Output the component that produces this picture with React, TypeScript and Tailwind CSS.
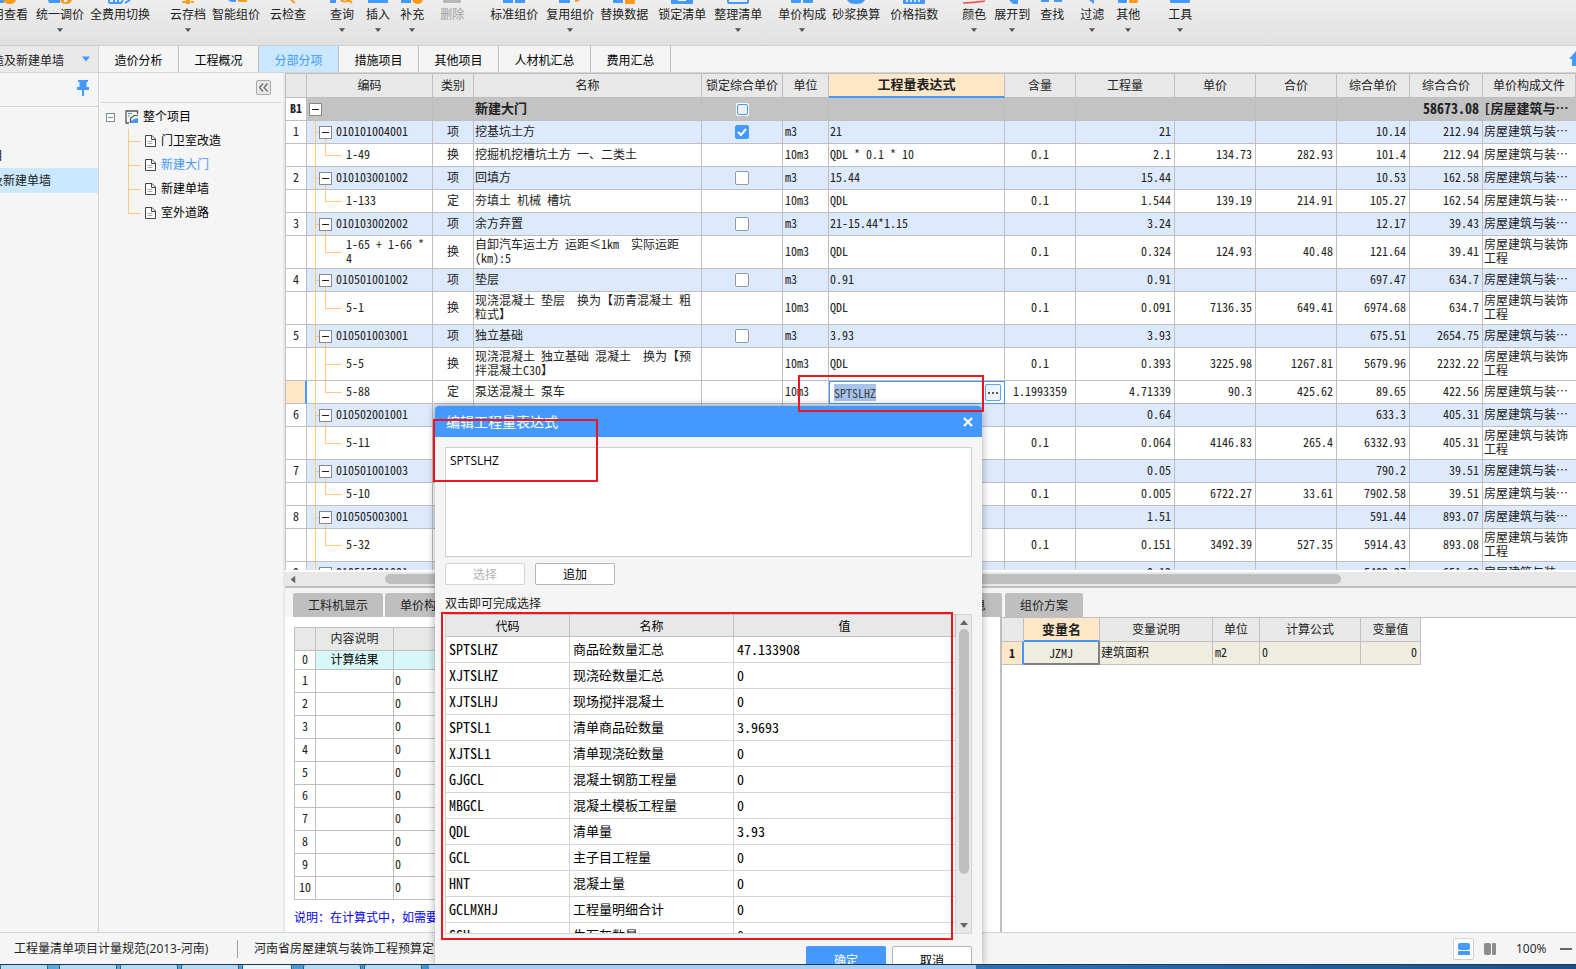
import { useEffect, useRef, useState } from "react";
import type { ReactNode } from "react";

interface Tool {
  label: string;
  gap: string;
  menu?: boolean;
  disabled?: boolean;
  icon: ReactNode;
}

interface Row {
  no?: string;
  kind: "section" | "item" | "sub";
  code?: string;
  type?: string;
  name?: string;
  lock?: boolean;
  unit?: string;
  expr?: string;
  ratio?: string;
  qty?: string;
  price?: string;
  total?: string;
  unitPrice?: string;
  sum?: string;
  file: string;
  tall?: boolean;
  more?: boolean;
  active?: boolean;
}

const B = "#4499ff";
const O = "#ff9a1f";

const TOOLS: Tool[] = [
  { label: "费用查看", gap: "-ml-5", icon: <><path d="M0 0h12v3H0z" fill={B} /><path d="M11 0h13c-1 3-3 4-6 4s-6-1-7-4z" fill={O} /></> },
  { label: "统一调价", gap: "ml-2", menu: true, icon: <><path d="M0 0h12v3H1z" fill={B} /><path d="M12 0h12c-1 3-3 4-6 4s-5-1-6-4z" fill={O} /><path d="M16 0h3v2h-3z" fill="#fff" /></> },
  { label: "全费用切换", gap: "ml-1.5", icon: <path d="M1 0v2q0 1 1 1h11l2-3M6 0v3M10 0v3M17 3l5-3" fill="none" stroke={B} strokeWidth="2" /> },
  { label: "云存档", gap: "ml-5", menu: true, icon: <><path d="M6 1h4v2H6zM15 1h3v2h-3z" fill={O} /><path d="M10 0h4v4h-4z" fill={O} /></> },
  { label: "智能组价", gap: "ml-1.5", icon: <><path d="M4 0h8v2H7z" fill={B} /><path d="M13 0h10v2H15z" fill={O} /></> },
  { label: "云检查", gap: "ml-2.5", icon: <path d="M15 0l4 3" stroke={O} strokeWidth="2" /> },
  { label: "查询", gap: "ml-6", menu: true, icon: <><path d="M0 0h6v3H0z" fill={B} /><path d="M11 0c1 2 6 2 8 0l3 3" fill="none" stroke={O} strokeWidth="2" /></> },
  { label: "插入", gap: "ml-3", menu: true, icon: <path d="M2 0h20v3H2z" fill={B} /> },
  { label: "补充", gap: "ml-2.5", menu: true, icon: <><path d="M1 0h10v3H1z" fill={B} /><path d="M12 0h11c-1 3-3 4-5 4s-5-1-6-4z" fill={O} /></> },
  { label: "删除", gap: "ml-4", disabled: true, icon: <path d="M3 0h18v2q0 1-1 1H4q-1 0-1-1z" fill="#b9b9b9" /> },
  { label: "标准组价", gap: "ml-6.5", icon: <path d="M1 0h10v3H1zM13 0h10v3H13z" fill={B} /> },
  { label: "复用组价", gap: "ml-2", menu: true, icon: <><path d="M1 0h11v3H1z" fill={B} /><path d="M17 0h5l-3 2h-2z" fill={O} /></> },
  { label: "替换数据", gap: "ml-1.5", icon: <><path d="M1 0h10v3H1z" fill={B} /><path d="M13 0h10v3q0 1-1 1h-9z" fill={O} /></> },
  { label: "锁定清单", gap: "ml-2.5", icon: <><path d="M1 0h22v3q0 1-1 1H2q-1 0-1-1z" fill={B} /><path d="M8 0h8v1H8z" fill="#fff" /></> },
  { label: "整理清单", gap: "ml-2", menu: true, icon: <path d="M2 0v2q0 1 1 1h18q1 0 1-1V0" fill="none" stroke={B} strokeWidth="2" /> },
  { label: "单价构成", gap: "ml-4", menu: true, icon: <path d="M1 0h10v2q0 1-1 1H2q-1 0-1-1zM13 0h10v2q0 1-1 1h-8q-1 0-1-1z" fill={B} /> },
  { label: "砂浆换算", gap: "ml-1.5", icon: <path d="M3 0h18c-2 3-5 4-9 4s-7-1-9-4z" fill={B} /> },
  { label: "价格指数", gap: "ml-2.5", icon: <><path d="M1 0h22v3q0 1-1 1H2q-1 0-1-1z" fill={B} /><path d="M5 0v2M9 0v2M13 0v2M17 0v2" stroke="#fff" strokeWidth="1.5" /></> },
  { label: "颜色", gap: "ml-6", menu: true, icon: <path d="M1 3c7 0 14-1 22-2" fill="none" stroke="#e85a55" strokeWidth="1.6" /> },
  { label: "展开到", gap: "ml-2", menu: true, icon: <path d="M9 0h9v3q0 1-1 1h-4z" fill={B} /> },
  { label: "查找", gap: "ml-2.5", icon: <path d="M1 0h8v2H1zM14 0h8v2h-8z" fill={B} /> },
  { label: "过滤", gap: "ml-4", menu: true, icon: <path d="M9 0h5v4z" fill={B} /> },
  { label: "其他", gap: "ml-3", menu: true, icon: <><path d="M2 0h9v2q0 1-1 1H3q-1 0-1-1z" fill={B} /><path d="M13 0h9v2q0 1-1 1h-7q-1 0-1-1z" fill={O} /></> },
  { label: "工具", gap: "ml-7", menu: true, icon: <path d="M2 0h20v2q0 1-2 1H4q-2 0-2-1z" fill={B} /> },
];

const TABS = ["造价分析", "工程概况", "分部分项", "措施项目", "其他项目", "人材机汇总", "费用汇总"];

const TREE = ["门卫室改造", "新建大门", "新建单墙", "室外道路"];

const SHORT = "房屋建筑与装…";
const FULL = "房屋建筑与装饰工程";

const ROWS: Row[] = [
  { no: "B1", kind: "section", name: "新建大门", lock: false, sum: "58673.08", file: "[房屋建筑与…" },
  { no: "1", kind: "item", code: "010101004001", type: "项", name: "挖基坑土方", lock: true, unit: "m3", expr: "21", qty: "21", unitPrice: "10.14", sum: "212.94", file: SHORT },
  { kind: "sub", code: "1-49", type: "换", name: "挖掘机挖槽坑土方 一、二类土", unit: "10m3", expr: "QDL * 0.1 * 10", ratio: "0.1", qty: "2.1", price: "134.73", total: "282.93", unitPrice: "101.4", sum: "212.94", file: SHORT },
  { no: "2", kind: "item", code: "010103001002", type: "项", name: "回填方", lock: false, unit: "m3", expr: "15.44", qty: "15.44", unitPrice: "10.53", sum: "162.58", file: SHORT },
  { kind: "sub", code: "1-133", type: "定", name: "夯填土 机械 槽坑", unit: "10m3", expr: "QDL", ratio: "0.1", qty: "1.544", price: "139.19", total: "214.91", unitPrice: "105.27", sum: "162.54", file: SHORT },
  { no: "3", kind: "item", code: "010103002002", type: "项", name: "余方弃置", lock: false, unit: "m3", expr: "21-15.44*1.15", qty: "3.24", unitPrice: "12.17", sum: "39.43", file: SHORT },
  { kind: "sub", tall: true, code: "1-65 + 1-66 *\n4", type: "换", name: "自卸汽车运土方 运距≤1km  实际运距\n(km):5", unit: "10m3", expr: "QDL", ratio: "0.1", qty: "0.324", price: "124.93", total: "40.48", unitPrice: "121.64", sum: "39.41", file: FULL },
  { no: "4", kind: "item", code: "010501001002", type: "项", name: "垫层", lock: false, unit: "m3", expr: "0.91", qty: "0.91", unitPrice: "697.47", sum: "634.7", file: SHORT },
  { kind: "sub", tall: true, code: "5-1", type: "换", name: "现浇混凝土 垫层  换为【沥青混凝土 粗\n粒式】", unit: "10m3", expr: "QDL", ratio: "0.1", qty: "0.091", price: "7136.35", total: "649.41", unitPrice: "6974.68", sum: "634.7", file: FULL },
  { no: "5", kind: "item", code: "010501003001", type: "项", name: "独立基础", lock: false, unit: "m3", expr: "3.93", qty: "3.93", unitPrice: "675.51", sum: "2654.75", file: SHORT },
  { kind: "sub", tall: true, more: true, code: "5-5", type: "换", name: "现浇混凝土 独立基础 混凝土  换为【预\n拌混凝土C30】", unit: "10m3", expr: "QDL", ratio: "0.1", qty: "0.393", price: "3225.98", total: "1267.81", unitPrice: "5679.96", sum: "2232.22", file: FULL },
  { kind: "sub", active: true, code: "5-88", type: "定", name: "泵送混凝土 泵车", unit: "10m3", ratio: "1.1993359", qty: "4.71339", price: "90.3", total: "425.62", unitPrice: "89.65", sum: "422.56", file: SHORT },
  { no: "6", kind: "item", code: "010502001001", qty: "0.64", unitPrice: "633.3", sum: "405.31", file: SHORT },
  { kind: "sub", tall: true, code: "5-11", ratio: "0.1", qty: "0.064", price: "4146.83", total: "265.4", unitPrice: "6332.93", sum: "405.31", file: FULL },
  { no: "7", kind: "item", code: "010501001003", qty: "0.05", unitPrice: "790.2", sum: "39.51", file: SHORT },
  { kind: "sub", code: "5-10", ratio: "0.1", qty: "0.005", price: "6722.27", total: "33.61", unitPrice: "7902.58", sum: "39.51", file: SHORT },
  { no: "8", kind: "item", code: "010505003001", qty: "1.51", unitPrice: "591.44", sum: "893.07", file: SHORT },
  { kind: "sub", tall: true, code: "5-32", ratio: "0.1", qty: "0.151", price: "3492.39", total: "527.35", unitPrice: "5914.43", sum: "893.08", file: FULL },
  { no: "9", kind: "item", code: "010515001001", qty: "0.12", unitPrice: "5402.27", sum: "651.62", file: SHORT },
];

const VARS = [
  ["SPTSLHZ", "商品砼数量汇总", "47.133908"],
  ["XJTSLHZ", "现浇砼数量汇总", "0"],
  ["XJTSLHJ", "现场搅拌混凝土", "0"],
  ["SPTSL1", "清单商品砼数量", "3.9693"],
  ["XJTSL1", "清单现浇砼数量", "0"],
  ["GJGCL", "混凝土钢筋工程量", "0"],
  ["MBGCL", "混凝土模板工程量", "0"],
  ["QDL", "清单量", "3.93"],
  ["GCL", "主子目工程量", "0"],
  ["HNT", "混凝土量", "0"],
  ["GCLMXHJ", "工程量明细合计", "0"],
  ["SSH", "生石灰数量", "0"],
];

const GRID_FONT = "[font-family:'Noto_Sans_Mono_CJK_SC','Noto_Sans_CJK_SC',monospace]";
const EDGE = "border-r border-b border-[#bfbfbf] p-0";
const CELL = "border-r border-b border-[#bfbfbf] p-0 pb-0.5";

function Caret({ className }: { className: string }) {
  return (
    <svg className={className} viewBox="0 0 8 5" aria-hidden="true">
      <path d="M0 0h8L4 5z" fill="currentColor" />
    </svg>
  );
}

function ToolButton({ tool }: { tool: Tool }) {
  return (
    <button
      disabled={tool.disabled}
      className={`${tool.gap} flex shrink-0 flex-col items-center whitespace-nowrap ${tool.disabled ? "text-[#a0a0a0]" : "text-[#222]"}`}
    >
      <svg className="h-1 w-6" viewBox="0 0 24 4" aria-hidden="true">{tool.icon}</svg>
      <span className="mt-[3px] h-4 leading-4">{tool.label}</span>
      {tool.menu && <Caret className="mt-[5px] h-1 w-1.5 text-[#555]" />}
    </button>
  );
}

function Toggle({ label }: { label: string }) {
  return (
    <button aria-label={label} className="flex size-[13px] shrink-0 items-center justify-center border border-[#888] bg-white">
      <span className="h-px w-[7px] bg-[#222]" />
    </button>
  );
}

function CodeCell({ row }: { row: Row }) {
  if (row.kind === "section") {
    return (
      <div className="flex h-full flex-col pl-[2px]">
        <span className="flex-1" />
        <Toggle label="折叠新建大门" />
        <span className="ml-1.5 w-px flex-1 bg-[#ffc97f]" />
      </div>
    );
  }
  if (row.kind === "item") {
    return (
      <div className="flex h-full items-center">
        <span className="w-[9px] self-stretch border-r border-[#ffc97f]" />
        <span className="h-px w-[3px] bg-[#ffc97f]" />
        <div className="flex flex-col items-center self-stretch">
          <span className="flex-1" />
          <Toggle label={`折叠${row.code}`} />
          <span className="w-px flex-1 bg-[#ffc97f]" />
        </div>
        <span className="ml-1 pb-0.5">{row.code}</span>
      </div>
    );
  }
  return (
    <div className="flex h-full items-center">
      <span className="w-[9px] self-stretch border-r border-[#ffc97f]" />
      <div className="ml-[9px] flex w-[17px] flex-col self-stretch">
        <span className="flex-1 border-b border-l border-[#ffc97f]" />
        <span className={`flex-1 border-l ${row.more ? "border-[#ffc97f]" : "border-transparent"}`} />
      </div>
      <span className="ml-1 pb-0.5 leading-[14px] whitespace-pre">{row.code}</span>
    </div>
  );
}

function LockBox({ row }: { row: Row }) {
  if (row.lock === undefined) return null;
  if (row.kind === "section") {
    return (
      <span className="mx-auto flex size-[13px] items-center justify-center rounded-[2px] bg-white">
        <input type="checkbox" aria-label="锁定新建大门" className="size-[11px] appearance-none rounded-[2px] border border-[#4499ff] bg-[#f0f0f0]" />
      </span>
    );
  }
  return (
    <label className="mx-auto grid size-[14px]">
      <input
        type="checkbox"
        aria-label={`锁定${row.name}`}
        defaultChecked={row.lock}
        className="peer col-start-1 row-start-1 size-[14px] appearance-none rounded-[2px] border border-[#999] bg-white checked:border-[#4499ff] checked:bg-[#4499ff]"
      />
      <svg className="pointer-events-none invisible col-start-1 row-start-1 size-[14px] peer-checked:visible" viewBox="0 0 14 14">
        <path d="M3 7l3 3 5-6" fill="none" stroke="#fff" strokeWidth="2" />
      </svg>
    </label>
  );
}

function ExprEditor() {
  const ref = useRef<HTMLInputElement>(null);
  useEffect(() => {
    ref.current?.focus();
    ref.current?.select();
  }, []);
  return (
    <div className="flex h-full items-center border border-[#4499ff] bg-white pr-[3px] pl-1">
      <input
        ref={ref}
        aria-label="工程量表达式"
        defaultValue="SPTSLHZ"
        className="h-[17px] min-w-0 flex-1 outline-none selection:bg-[#a6c3ec] selection:text-[#444]"
      />
      <button aria-label="编辑表达式" className="flex h-[17px] w-4 items-center justify-center gap-[2px] rounded-[2px] border border-[#5ba3ea] bg-[#eef2fa]">
        <span className="size-[2px] bg-[#555]" />
        <span className="size-[2px] bg-[#555]" />
        <span className="size-[2px] bg-[#555]" />
      </button>
    </div>
  );
}

function MainGrid() {
  const heads = ["", "编码", "类别", "名称", "锁定综合单价", "单位", "工程量表达式", "含量", "工程量", "单价", "合价", "综合单价", "综合合价", "单价构成文件"];
  return (
    <table className={`w-full table-fixed border-separate border-spacing-0 text-xs leading-[14px] text-[#222] ${GRID_FONT}`}>
      <colgroup>
        <col className="w-[22px]" />
        <col className="w-[126px]" />
        <col className="w-[41px]" />
        <col className="w-[228px]" />
        <col className="w-[81px]" />
        <col className="w-[46px]" />
        <col className="w-[176px]" />
        <col className="w-[71px]" />
        <col className="w-[99px]" />
        <col className="w-[81px]" />
        <col className="w-[81px]" />
        <col className="w-[73px]" />
        <col className="w-[73px]" />
        <col />
      </colgroup>
      <thead>
        <tr>
          {heads.map((h, i) => (
            <th
              key={i}
              className={
                i === 6
                  ? "h-[24px] border-r border-b-2 border-r-[#bfbfbf] border-b-[#4499ff] bg-[#ffe7c7] p-0 pb-0.5 text-[13px] font-bold"
                  : `h-[24px] bg-[#e8e8e8] font-normal whitespace-nowrap ${CELL} ${i === 0 ? "border-l" : ""}`
              }
            >
              {h}
            </th>
          ))}
        </tr>
      </thead>
      <tbody>
        {ROWS.map((r, i) => {
          const bg = r.kind === "section" ? "bg-[#c3c3c3] font-bold" : r.kind === "item" ? "bg-[#dde9fd]" : "bg-white";
          return (
            <tr key={i} className={`${r.tall ? "h-[33px]" : "h-[23px]"} ${bg}`}>
              <td className={`${CELL} border-l text-center ${r.active ? "border-r-2 border-r-[#4499ff] bg-[#ffe7c7]" : "bg-white"}`}>{r.no}</td>
              <td className={`${EDGE} ${r.tall ? "h-[33px]" : "h-[23px]"}`}><CodeCell row={r} /></td>
              <td className={`${CELL} text-center`}>{r.type}</td>
              <td className={`${CELL} pl-px whitespace-pre ${r.kind === "section" ? "text-[13px]" : ""}`}>{r.name}</td>
              <td className={EDGE}><div className="flex"><LockBox row={r} /></div></td>
              <td className={`${CELL} pl-[2px]`}>{r.unit}</td>
              {r.active ? (
                <td className="h-[23px] p-0"><ExprEditor /></td>
              ) : (
                <td className={`${CELL} pl-px`}>{r.expr}</td>
              )}
              <td className={`${CELL} text-center`}>{r.ratio}</td>
              <td className={`${CELL} pr-[3px] text-right`}>{r.qty}</td>
              <td className={`${CELL} pr-[3px] text-right`}>{r.price}</td>
              <td className={`${CELL} pr-[3px] text-right`}>{r.total}</td>
              <td className={`${CELL} pr-[3px] text-right`}>{r.unitPrice}</td>
              <td className={`${CELL} pr-[3px] text-right ${r.kind === "section" ? "text-sm leading-[14px]" : ""}`}>{r.sum}</td>
              <td className={`overflow-hidden border-b border-[#bfbfbf] p-0 pb-0.5 pl-px ${r.kind === "section" ? "text-[13px] whitespace-nowrap" : ""}`}>{r.file}</td>
            </tr>
          );
        })}
      </tbody>
    </table>
  );
}

function ProjectTree() {
  return (
    <aside className="flex w-[184px] shrink-0 flex-col bg-[#f5f5f5]">
      <div className="mx-[2px] flex h-[30px] items-center justify-end border-b border-[#d9d9d9] pr-2.5">
        <button aria-label="收起" className="flex size-[15px] items-center justify-center rounded-[2px] border border-[#aaa] bg-[#e8e8e8]">
          <svg className="size-[11px]" viewBox="0 0 11 11" fill="none" stroke="#666" strokeWidth="1.2">
            <path d="M5 1.5L1.500 5.500 5 9.500M9.500 1.500L6 5.500l3.500 4" />
          </svg>
        </button>
      </div>
      <div className="mt-0.5 flex h-6 items-center pl-[7px]">
        <button aria-label="折叠整个项目" className="flex size-[9px] items-center justify-center border border-[#888] bg-white">
          <span className="h-px w-[5px] bg-[#4499ff]" />
        </button>
        <svg className="ml-2.5 size-[14px]" viewBox="0 0 14 14">
          <path d="M12.500 4V1H1v12h3" fill="none" stroke="#555" strokeWidth="1.300" />
          <path d="M3 3.500h4M3 6h2" stroke={B} strokeWidth="1.200" />
          <path d="M13 5.500H9L5.500 8.500V13" fill="none" stroke="#555" strokeWidth="1.200" />
          <path d="M6 13v-2l3-2 4-1v5z" fill={B} />
        </svg>
        <span className="ml-1 text-black">整个项目</span>
      </div>
      <ul className="pl-[29px]">
        {TREE.map((t, i) => (
          <li key={t} className="flex h-6 items-center">
            <span className="flex w-[13px] flex-col self-stretch">
              <span className="flex-1 border-b border-l border-[#ffc97f]" />
              <span className={`flex-1 border-l ${i < TREE.length - 1 ? "border-[#ffc97f]" : "border-transparent"}`} />
            </span>
            <svg className="ml-1 h-3 w-[11px]" viewBox="0 0 11 12" fill="none" stroke="#444">
              <path d="M.5.5h6.500l3.500 3.500v7.500H.5z" fill="#fff" />
              <path d="M6.500.5v4h4" />
              <path d="M2.500 6.500h5M2.500 8.500h5" stroke="#aaa" />
            </svg>
            <a href="#" className={`ml-[5px] ${i === 1 ? "text-[#4499ff]" : "text-black"}`}>{t}</a>
          </li>
        ))}
      </ul>
    </aside>
  );
}

function ResultPanel() {
  return (
    <section className="flex w-[717px] shrink-0 flex-col">
      <div className="flex h-[29px] gap-[2px] pt-[5px] pl-2">
        <button className="w-[90px] shrink-0 rounded-t-[2px] bg-[#bfbfbf] pt-0.5 text-[#222]">工料机显示</button>
        <button className="w-[78px] shrink-0 rounded-t-[2px] bg-[#bfbfbf] pt-0.5 text-[#222]">单价构成</button>
        <button className="flex-1 rounded-t-[2px] bg-[#bfbfbf] pt-0.5 pr-4 text-right text-[#222]">查询信息</button>
      </div>
      <div className="min-h-0 flex-1 border-r-2 border-[#bfbfbf] bg-white pt-[10px] pl-[9px]">
        <table className={`w-[400px] table-fixed border-separate border-spacing-0 border-t border-l border-[#bfbfbf] leading-[14px] ${GRID_FONT}`}>
          <colgroup>
            <col className="w-[21px]" />
            <col className="w-[78px]" />
            <col />
          </colgroup>
          <thead>
            <tr className="h-[23px] bg-[#e8e8e8]">
              <th className={CELL} />
              <th className={`${CELL} font-normal`}>内容说明</th>
              <th className={`${CELL} font-normal`} />
            </tr>
          </thead>
          <tbody>
            <tr className="h-[19px] bg-[#d8f7f8]">
              <td className={`${CELL} bg-white text-center`}>0</td>
              <td className={`${CELL} text-center text-black`}>计算结果</td>
              <td className={CELL} />
            </tr>
            {[1, 2, 3, 4, 5, 6, 7, 8, 9, 10].map((n) => (
              <tr key={n} className="h-[23px]">
                <td className={`${CELL} text-center`}>{n}</td>
                <td className={CELL} />
                <td className={`${CELL} pl-px`}>0</td>
              </tr>
            ))}
          </tbody>
        </table>
        <p className="mt-2 leading-5 text-[#0000f0]">说明：在计算式中，如需要</p>
      </div>
    </section>
  );
}

function VariablePanel() {
  return (
    <section className="flex min-w-0 flex-1 flex-col">
      <div className="flex h-[29px] pt-[5px] pl-[3px]">
        <button className="w-[78px] rounded-t-[2px] bg-[#bfbfbf] pt-0.5 text-[#222]">组价方案</button>
      </div>
      <div className="flex-1 border-t border-[#bfbfbf] bg-white">
        <table className={`w-[419px] table-fixed border-separate border-spacing-0 leading-[14px] text-[#222] ${GRID_FONT}`}>
          <colgroup>
            <col className="w-[22px]" />
            <col className="w-[76px]" />
            <col className="w-[113px]" />
            <col className="w-[47px]" />
            <col className="w-[101px]" />
            <col />
          </colgroup>
          <thead>
            <tr className="h-6 bg-[#e8e8e8]">
              <th className={CELL} />
              <th className="border-r border-b-2 border-r-[#bfbfbf] border-b-[#4499ff] bg-[#ffe7c7] p-0 text-[13px] font-bold">变量名</th>
              <th className={`${CELL} font-normal`}>变量说明</th>
              <th className={`${CELL} font-normal`}>单位</th>
              <th className={`${CELL} font-normal`}>计算公式</th>
              <th className={`${CELL} font-normal`}>变量值</th>
            </tr>
          </thead>
          <tbody>
            <tr className="h-[23px] bg-[#eeeddf]">
              <td className="border-r-2 border-b border-r-[#4499ff] border-b-[#bfbfbf] bg-[#ffe7c7] p-0 text-center font-bold">1</td>
              <td className="border-r-2 border-b-2 border-[#808080] p-0 text-center">JZMJ</td>
              <td className={`${CELL} pl-px`}>建筑面积</td>
              <td className={`${CELL} pl-[2px]`}>m2</td>
              <td className={`${CELL} pl-[2px]`}>0</td>
              <td className={`${CELL} pr-[3px] text-right`}>0</td>
            </tr>
          </tbody>
        </table>
      </div>
    </section>
  );
}

function ExprDialog() {
  const [text, setText] = useState("SPTSLHZ");
  return (
    <div role="dialog" aria-label="编辑工程量表达式" className="absolute top-[406px] bottom-[5px] left-[435px] flex w-[547px] flex-col overflow-hidden rounded-t bg-[#f5f5f5] shadow-[0_0_8px_rgba(0,0,0,0.35)]">
      <header className="flex h-[31px] shrink-0 items-center justify-between bg-[#4499ff] pr-[9px] pl-[11px] text-sm text-white">
        <h2>编辑工程量表达式</h2>
        <button aria-label="关闭">
          <svg className="size-[10px]" viewBox="0 0 10 10" stroke="#fff" strokeWidth="2.400">
            <path d="M1 1l8 8M9 1L1 9" />
          </svg>
        </button>
      </header>
      <div className="shrink-0 px-[10px] pt-[10px]">
        <textarea
          aria-label="表达式"
          value={text}
          onChange={(e) => setText(e.target.value)}
          className="block h-[110px] w-full resize-none border border-[#cfcfcf] bg-white px-1 py-[5px] leading-4 text-black outline-none"
        />
        <div className="mt-1.5 flex gap-[10px]">
          <button disabled className="h-[22px] w-20 rounded-[2px] border border-[#d4d4d4] bg-white pt-px text-[#b5b5b5]">选择</button>
          <button className="h-[22px] w-20 rounded-[2px] border border-[#b5b5b5] bg-white pt-px text-black">追加</button>
        </div>
        <p className="mt-2 h-[21px] leading-[21px]">双击即可完成选择</p>
        <div className="flex h-[320px] border-b border-l border-[#d4d4d4] bg-white">
          <div className="min-w-0 flex-1 overflow-hidden">
            <table className={`w-full table-fixed border-separate border-spacing-0 text-[13px] leading-4 text-black ${GRID_FONT}`}>
              <colgroup>
                <col className="w-[124px]" />
                <col className="w-[164px]" />
                <col />
              </colgroup>
              <thead>
                <tr className="h-[23px] bg-[#e8e8e8] text-xs">
                  <th className={`${EDGE} border-t font-normal`}>代码</th>
                  <th className={`${EDGE} border-t font-normal`}>名称</th>
                  <th className={`${EDGE} border-t font-normal`}>值</th>
                </tr>
              </thead>
              <tbody>
                {VARS.map(([code, name, value]) => (
                  <tr key={code} className="h-[26px]">
                    <td className="border-r border-b border-[#d4d4d4] p-0 pb-0.5 pl-[3px] text-sm leading-4">{code}</td>
                    <td className="border-r border-b border-[#d4d4d4] p-0 pb-0.5 pl-[3px]">{name}</td>
                    <td className="border-r border-b border-[#d4d4d4] p-0 pb-0.5 pl-[3px] text-sm leading-4">{value}</td>
                  </tr>
                ))}
              </tbody>
            </table>
          </div>
          <div className="flex w-4 flex-col items-center border-t border-r border-[#d4d4d4] bg-[#e8e8e8] py-[5px] text-[#666]">
            <Caret className="h-[5px] w-2 rotate-180" />
            <span className="mt-1 h-[245px] w-[10px] rounded-full bg-[#bfbfbf]" />
            <Caret className="mt-auto h-[5px] w-2" />
          </div>
        </div>
        <footer className="mt-3 flex justify-end gap-[6px]">
          <button className="h-[29px] w-20 rounded-[2px] bg-[#4499ff] text-white">确定</button>
          <button className="h-[29px] w-20 rounded-[2px] border border-[#b5b5b5] bg-white text-black">取消</button>
        </footer>
      </div>
    </div>
  );
}

export default function App() {
  return (
    <div className="relative flex h-screen flex-col overflow-hidden bg-[#f5f5f5] text-xs text-[#222] [font-family:'Open_Sans','Noto_Sans_CJK_SC',sans-serif]">
      {/* ribbon */}
      <nav className="flex h-[46px] shrink-0 items-start overflow-hidden border-b border-[#cfcfcf] bg-linear-to-b from-[#eeeeee] to-[#e0e0e0]">
        {TOOLS.map((t) => (
          <ToolButton key={t.label} tool={t} />
        ))}
      </nav>

      {/* document tabs */}
      <div className="flex h-[27px] shrink-0 border-b border-[#d4d4d4]">
        <div className="flex w-[99px] shrink-0 items-center overflow-hidden border-r border-[#d4d4d4] bg-[#e9e9e9]">
          <select aria-label="单位工程" className="-ml-5 w-[84px] shrink-0 appearance-none pt-[3px] outline-none">
            <option>改造及新建单墙</option>
          </select>
          <Caret className="ml-[18px] h-[6px] w-2 shrink-0 text-[#4499ff]" />
        </div>
        {TABS.map((t, i) => (
          <button
            key={t}
            className={`shrink-0 border-r border-[#bfbfbf] pt-[3px] ${t.length > 4 ? "w-[92px]" : "w-20"} ${i === 2 ? "bg-[#cce8ff] text-[#4499ff]" : "text-black"}`}
          >
            {t}
          </button>
        ))}
        <svg className="mt-1 ml-auto h-4 w-[7px]" viewBox="0 0 7 16">
          <path d="M0 9L7 1v15H3V9z" fill={B} />
        </svg>
      </div>

      <main className="flex min-h-0 flex-1">
        {/* pinned project list */}
        <aside className="flex w-[99px] shrink-0 flex-col border-r border-[#d4d4d4]">
          <div className="flex h-[34px] items-center justify-end border-b border-[#d4d4d4] pr-[9px] pb-1">
            <svg className="h-4 w-3" viewBox="0 0 12 16" fill={B} aria-label="固定">
              <path d="M1 0h10v2H9.500v5H12v3H7v6H5v-6H0V7h2.500V2H1z" />
            </svg>
          </div>
          <ul className="mt-9 overflow-hidden whitespace-nowrap">
            <li className="-ml-[45px] h-[25px] leading-[25px]">整个项目</li>
            <li className="bg-[#cce8ff]">
              <a href="#" className="-ml-[9px] block h-[25px] leading-[25px]">及新建单墙</a>
            </li>
          </ul>
        </aside>

        <ProjectTree />
        <div className="w-[2px] shrink-0 bg-[#e8e8e8]" />

        <div className="flex min-w-0 flex-1 flex-col">
          <div className="min-h-0 flex-1 overflow-hidden border-t border-[#bfbfbf] border-b-2 border-b-white">
            <MainGrid />
          </div>
          <div className="flex h-4 shrink-0 items-center border-b-2 border-[#bfbfbf] bg-[#e8e8e8]">
            <Caret className="ml-1 h-[5px] w-2 rotate-90 text-[#666]" />
            <span className="ml-[88px] h-[10px] w-[956px] rounded-full bg-[#bfbfbf]" />
          </div>
          <div className="flex h-[344px] shrink-0">
            <ResultPanel />
            <VariablePanel />
          </div>
        </div>
      </main>

      {/* status bar */}
      <footer className="flex h-8 shrink-0 items-center border-t border-[#d4d4d4] pl-3.5 whitespace-nowrap">
        <span className="w-[223px]">工程量清单项目计量规范(2013-河南)</span>
        <span className="h-[18px] w-px bg-[#9a9fb0]" />
        <span className="ml-4">河南省房屋建筑与装饰工程预算定</span>
        <span className="ml-auto flex items-center">
          <button aria-label="上下布局" className="flex h-[22px] w-[21px] flex-col items-center justify-center gap-px rounded-[2px] border border-[#d0d0d0] bg-white">
            <span className="h-[7px] w-3 rounded-[2px] bg-[#4499ff]" />
            <span className="h-1 w-3 rounded-[1px] bg-[#4499ff]" />
          </button>
          <button aria-label="左右布局" className="ml-[10px] flex gap-px">
            <span className="h-[12px] w-[7px] rounded-[2px] bg-[#8c8c8c]" />
            <span className="h-[12px] w-1 rounded-[1px] bg-[#8c8c8c]" />
          </button>
          <span className="ml-5 w-8">100%</span>
          <button aria-label="缩小" className="mr-1 ml-3 h-[2px] w-3 bg-[#666]" />
        </span>
      </footer>

      {/* taskbar edge */}
      <div className="z-10 flex h-[5px] shrink-0 gap-[3px] border-t border-[#1d3a52] bg-linear-to-r from-[#5aaede] via-[#2f7fc4] to-[#1c4f8c]">
        {["w-12", "ml-2 w-[58px]", "w-[58px]", "w-[58px]", "w-[50px]", "ml-2 w-[58px]", "w-[58px]"].map((w, i) => (
          <span key={i} className={`${w} rounded-t-[2px] border-x border-[#2b5f85] ${i === 4 ? "bg-[#e8f3fb]" : "bg-[#b5dbf0]"}`} />
        ))}
        <span className="ml-1 w-[547px] bg-[#a9cff5]" />
      </div>

      <ExprDialog />

      {/* red callouts */}
      <div className="pointer-events-none absolute top-[375px] left-[798px] h-[37px] w-[186px] border-2 border-[#ee1520]" />
      <div className="pointer-events-none absolute top-[419px] left-[433px] h-[63px] w-[165px] border-2 border-[#ee1520]" />
      <div className="pointer-events-none absolute top-[612px] left-[441px] h-[328px] w-[512px] border-2 border-[#ee1520]" />
    </div>
  );
}
